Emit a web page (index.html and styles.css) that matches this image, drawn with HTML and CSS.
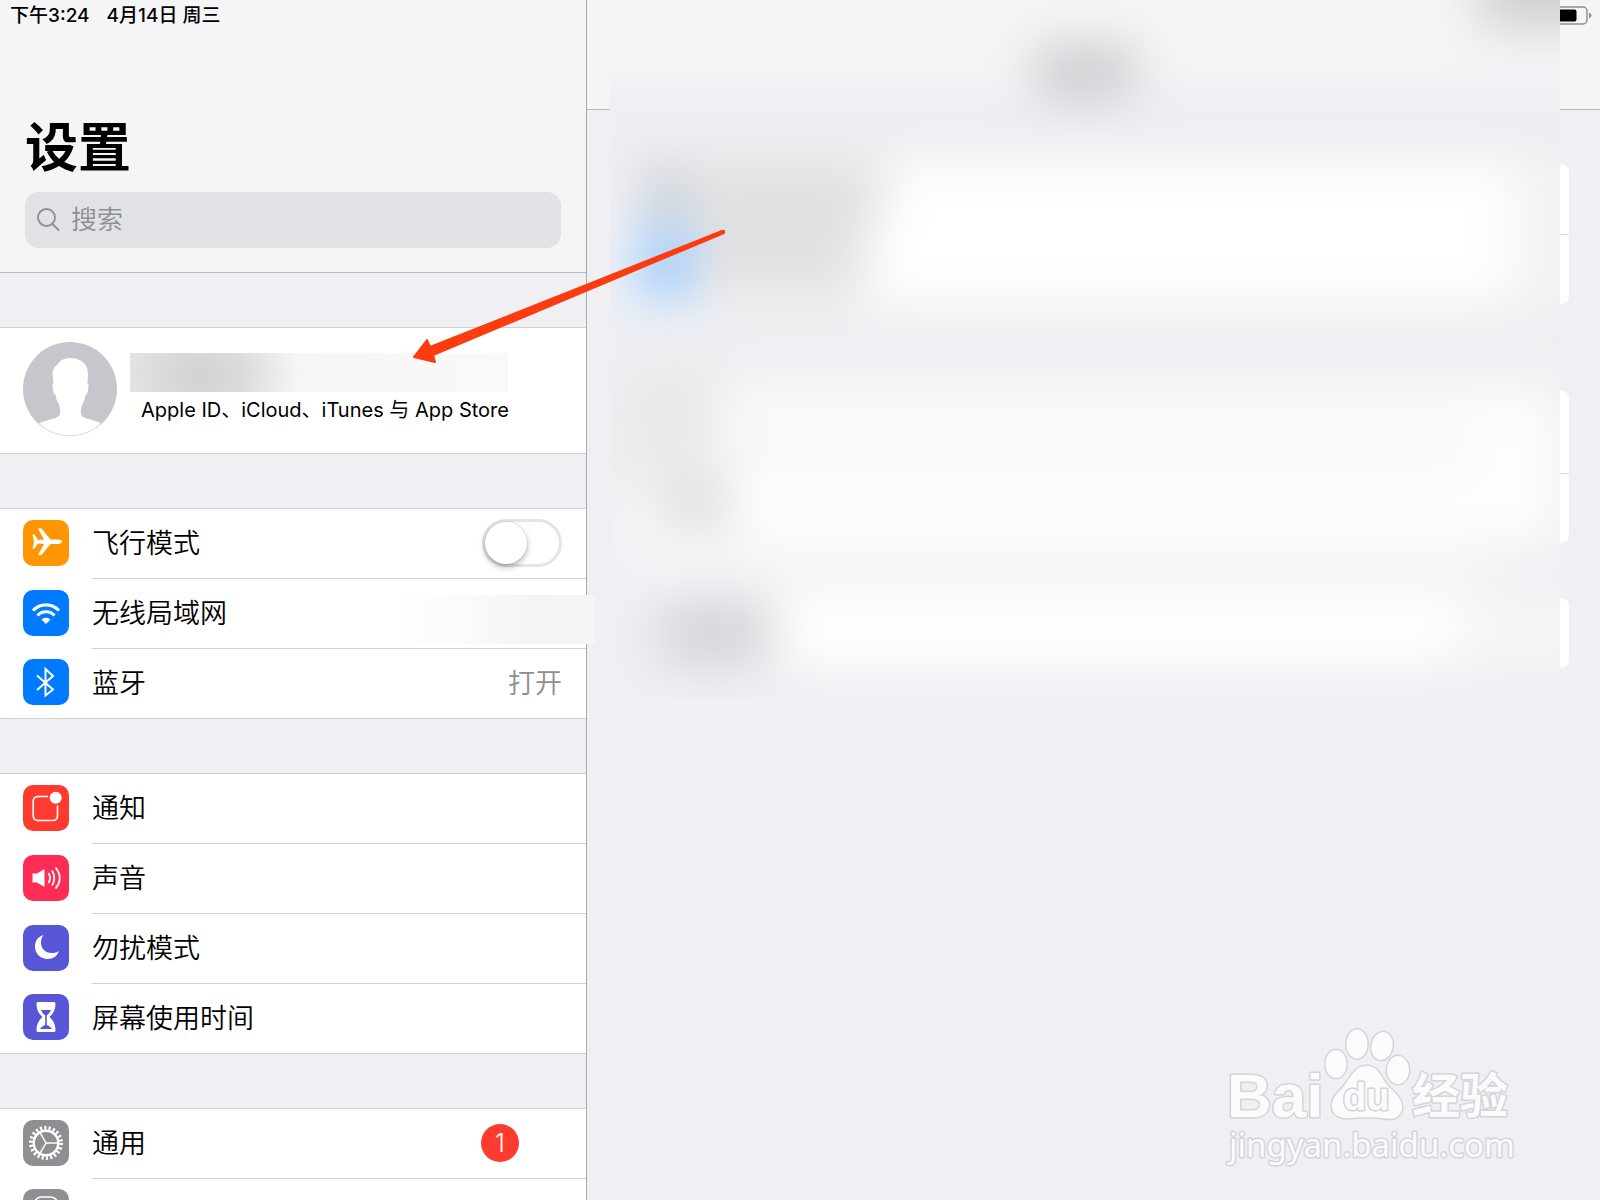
FILE: index.html
```html
<!DOCTYPE html>
<html lang="zh-CN">
<head>
<meta charset="utf-8">
<meta name="viewport" content="width=device-width, initial-scale=1">
<title>设置</title>
<link rel="stylesheet" href="styles.css">
</head>
<body>
<div class="app">
  <aside class="sidebar">
    <header class="sidebar-head">
      <div class="status"><span>下午3:24</span><span>4月14日 周三</span></div>
      <h1 class="title">设置</h1>
      <label class="search">
        <svg class="search-icon" viewBox="0 0 24 24" aria-hidden="true"><circle cx="9.500" cy="9.500" r="8.500"/><path d="M15.500 16L22 22.500"/></svg>
        <input class="search-input" type="search" placeholder="搜索" aria-label="搜索">
      </label>
    </header>

    <a class="group profile" href="#account">
      <svg class="avatar" viewBox="0 0 94 94" aria-hidden="true">
        <circle cx="47" cy="47" r="47" fill="#c7c6cd"/>
        <path fill="#fff" d="M47 16C57 16 65 21 65 32L64.500 42C66 42 65.500 45 65 48C64.500 51 64 53 62.500 53C62 57 61 59 59.500 62C58 66 57 71 59 74C62 77 72 78 78 81.500A46 46 0 0 1 16 81.500C22 78 33 77 36 74C38 71 37 66 36 62C34 59 33 57 33 53C31 53 30.500 51 30 48C29.500 45 29 42 30.500 42L29.500 32C30 27 31 25 34 23C37 18 42 16 47 16Z"/>
      </svg>
      <span class="profile-text">
        <span class="name-mask"></span>
        <span class="profile-sub">Apple ID、iCloud、iTunes 与 App Store</span>
      </span>
    </a>

    <nav class="group">
      <div class="row">
        <svg class="icon orange" viewBox="0 0 46 46" aria-hidden="true"><path fill="#fff" d="M9.500 14.500H11.500L15 20L21 19.500L15 8.500H18.500L27.500 19.500H35C37.500 19.500 39 20.500 39 21.700S37.500 24 35 24H27.500L18.500 35H15L21 24L15 23.500L11.500 28.500H9.500L11 21.700Z"/></svg>
        <label class="line" for="airplane"><span class="label">飞行模式</span>
          <input class="switch" id="airplane" type="checkbox" role="switch">
        </label>
      </div>
      <a class="row wifi" href="#wifi">
        <svg class="icon blue" viewBox="0 0 46 46" aria-hidden="true"><g fill="none" stroke="#fff" stroke-width="3.200"><path d="M10 20.500C17 13 29 13 36 20.500"/><path d="M14.500 25.500C19 20.500 27 20.500 31.500 25.500"/></g><path fill="#fff" d="M18.500 29.500C21 27 25 27 27.500 29.500L23 34Z"/></svg>
        <span class="line"><span class="label">无线局域网</span></span>
        <span class="wifi-mask"></span>
      </a>
      <a class="row" href="#bluetooth">
        <svg class="icon blue" viewBox="0 0 46 46" aria-hidden="true"><path fill="none" stroke="#fff" stroke-width="2" d="M14 16.500L30 30.500L22.500 36.500V10L30 17L14 31"/></svg>
        <span class="line"><span class="label">蓝牙</span><span class="value">打开</span></span>
      </a>
    </nav>

    <nav class="group">
      <a class="row" href="#notifications">
        <svg class="icon red" viewBox="0 0 46 46" aria-hidden="true"><path fill="none" stroke="#fff" stroke-width="1.600" d="M25 11.500H15.500Q10.200 11.500 10.200 16.500V30.500Q10.200 35.500 15.500 35.500H29.500Q34.500 35.500 34.500 30.500V20.500"/><circle cx="32.700" cy="12.800" r="6" fill="#fff"/></svg>
        <span class="line"><span class="label">通知</span></span>
      </a>
      <a class="row" href="#sounds">
        <svg class="icon pink" viewBox="0 0 46 46" aria-hidden="true"><path fill="#fff" d="M9.500 18.500H14L21.500 14V32L14 27.500H9.500Z"/><g fill="none" stroke="#fff" stroke-width="1.800"><path d="M25.500 18Q28.500 23 25.500 28"/><path d="M29 15.500Q33.500 23 29 30.500"/><path d="M32.500 12.500Q41 23 32.500 33.500"/></g></svg>
        <span class="line"><span class="label">声音</span></span>
      </a>
      <a class="row" href="#dnd">
        <svg class="icon indigo" viewBox="0 0 46 46" aria-hidden="true"><path fill="#fff" d="M20.500 10C15 11.500 12 16 12 21.500C12 28.500 17.500 34 24.500 34C30 34 34.500 31 36 26C34 27.500 31.500 28 29 28C22 28 18 23.500 18 17.500C18 14.500 19 12 20.500 10Z"/></svg>
        <span class="line"><span class="label">勿扰模式</span></span>
      </a>
      <a class="row" href="#screen-time">
        <svg class="icon indigo" viewBox="0 0 46 46" aria-hidden="true"><path fill="#fff" d="M15 8H31Q32.500 8 32.500 9.500C32.500 16 30 20 26.500 23C30 26 32.500 30 32.500 36.500Q32.500 38 31 38H15Q13.500 38 13.500 36.500C13.500 30 16 26 19.500 23C16 20 13.500 16 13.500 9.500Q13.500 8 15 8Z"/><path fill="#5856d6" d="M18 16H28C27 18.500 25.500 20 23.800 21.500V31C26 32 28 33 29 35H17C18 33 20 32 22.200 31V21.500C20.500 20 19 18.500 18 16Z"/></svg>
        <span class="line"><span class="label">屏幕使用时间</span></span>
      </a>
    </nav>

    <nav class="group">
      <a class="row" href="#general">
        <svg class="icon gray" viewBox="0 0 46 46" aria-hidden="true"><g fill="none" stroke="#fff"><circle cx="23" cy="23" r="15" stroke-width="4" stroke-dasharray="2.100 2.184"/><circle cx="23" cy="23" r="12.300" stroke-width="2.400"/><path stroke-width="1.500" d="M23 23H35M23 23L17 12.600M23 23L17 33.400"/></g></svg>
        <span class="line"><span class="label">通用</span><span class="badge">1</span></span>
      </a>
      <a class="row" href="#control-center" aria-label="控制中心">
        <svg class="icon gray" viewBox="0 0 46 46" aria-hidden="true"><rect x="12" y="8" width="22" height="12" rx="6" fill="none" stroke="#fff" stroke-width="1.600"/></svg>
        <span class="line"></span>
      </a>
    </nav>
  </aside>

  <main class="detail">
    <header class="detail-head">
      <svg class="battery" viewBox="0 0 44 20" aria-hidden="true"><rect x="1" y="1" width="38" height="17" rx="4" fill="none" stroke="#8e8e93" stroke-width="1.500"/><rect x="3.500" y="3.500" width="25" height="12" rx="2"/><path fill="#8e8e93" d="M41 6.500Q43.500 7.500 43.500 9.500T41 12.500Z"/></svg>
    </header>
    <div class="cards">
      <section class="card"><div class="cell"></div><div class="cell"></div></section>
      <section class="card"><div class="cell tall"></div><div class="cell"></div></section>
      <section class="card"><div class="cell"></div></section>
    </div>
    <svg class="haze" viewBox="0 0 950 700" preserveAspectRatio="none" aria-hidden="true">
      <defs>
        <filter id="soft" color-interpolation-filters="sRGB" filterUnits="userSpaceOnUse" x="-150" y="-150" width="1250" height="1000"><feGaussianBlur stdDeviation="25"/></filter>
      </defs>
      <rect width="950" height="700" fill="#efeff4"/>
      <g filter="url(#soft)">
        <rect x="-150" y="-150" width="1250" height="1000" fill="#efeff4"/>
        <rect x="-150" y="-150" width="1250" height="240" fill="#f5f5f8"/>
        <rect x="-150" y="109" width="1250" height="16" fill="#ebebee"/>
        <rect x="20" y="162" width="940" height="142" fill="#fff"/>
        <rect x="900" y="162" width="60" height="142" fill="#f4f4f5"/>
        <rect x="20" y="388" width="930" height="158" fill="#fdfdfd"/>
        <rect x="20" y="546" width="860" height="50" fill="#f3f4f7"/>
        <rect x="60" y="596" width="790" height="70" fill="#fff"/>
        <rect x="850" y="596" width="130" height="70" fill="#f6f6f8"/>
        <rect x="425" y="46" width="100" height="50" fill="#c8cacc"/>
        <rect x="870" y="-60" width="160" height="88" fill="#cdcfd0"/>
        <rect x="28" y="164" width="52" height="56" fill="#cbcfd6"/>
        <rect x="84" y="164" width="190" height="58" fill="#e0e0e0"/>
        <rect x="28" y="226" width="54" height="74" fill="#9dcafb"/>
        <rect x="86" y="222" width="170" height="74" fill="#e1e1e1"/>
        <rect x="0" y="310" width="950" height="60" fill="#efeff3"/>
        <rect x="20" y="376" width="90" height="50" fill="#e7e7e8"/>
        <rect x="10" y="426" width="100" height="60" fill="#ebebeb"/>
        <rect x="50" y="482" width="70" height="48" fill="#dbdcdd"/>
        <rect x="120" y="430" width="740" height="28" fill="#f3f3f3"/>
        <rect x="50" y="600" width="112" height="64" fill="#d2d4d7"/>
      </g>
    </svg>
  </main>

  <svg class="arrow" viewBox="0 0 314 136" aria-hidden="true"><path fill="#fc3c10" stroke="#fc3c10" stroke-width="2" stroke-linejoin="round" d="M3 128L16 111L19 118L311 2Q314 1 313 4L22 126L24 133Z"/></svg>

  <svg class="watermark" viewBox="0 0 300 160" role="img" aria-label="Baidu 经验">
    <g class="wm-shape">
      <ellipse cx="116" cy="44" rx="10.500" ry="14"/><ellipse cx="137" cy="24" rx="10.500" ry="14.500"/><ellipse cx="162" cy="26" rx="10.500" ry="14" transform="rotate(10 162 26)"/><ellipse cx="178" cy="50" rx="11" ry="14"/>
      <path d="M147 46C160 46 161 60 171 69C179 76 183 82 182 89C180 99 171 100 163 98C151 97 143 97 131 98C121 99 112 96 112 86C112 77 118 73 123 67C131 58 134 46 147 46Z"/>
    </g>
    <text class="wm-text wm-bai" x="7" y="97">Bai</text>
    <text class="wm-text wm-du" x="123" y="90">du</text>
    <text class="wm-text wm-exp" x="192" y="93">经验</text>
    <text class="wm-text wm-url" x="9" y="137">jingyan.baidu.com</text>
  </svg>
</div>
</body>
</html>
```
FILE: styles.css
```css
* { box-sizing: border-box; }

body {
  margin: 0;
  background: #efeff4;
  color: #000;
  font-family: Inter, "Noto Sans CJK SC", sans-serif;
  font-size: 27px;
  font-weight: 350;
}

a { color: inherit; text-decoration: none; }

.app {
  position: relative;
  display: flex;
  height: 100vh;
  overflow: hidden;
}

.sidebar {
  flex: 0 0 587px;
  border-right: 1px solid #a9a9ae;
}

.sidebar-head {
  height: 273px;
  padding: 0 25px;
  background: #f5f5f8;
  border-bottom: 1px solid #b9b9be;
}

.status {
  display: flex;
  gap: 17px;
  height: 32px;
  margin: 0 -15px;
  font-size: 19px;
  font-weight: 500;
  line-height: 32px;
}

.title {
  margin: 78px 0 6px;
  font-size: 53px;
  font-weight: 700;
  line-height: 76px;
}

.search {
  display: flex;
  align-items: center;
  gap: 10px;
  height: 56px;
  padding: 0 12px;
  border-radius: 14px;
  background: #e1e2e6;
}

.search-icon {
  width: 24px;
  height: 24px;
  fill: none;
  stroke: #8e8e93;
  stroke-width: 1.800;
}

.search-input {
  flex: 1;
  min-width: 0;
  height: 54px;
  padding: 0 0 2px;
  border: 0;
  outline: 0;
  background: none;
  font: inherit;
  font-size: 26px;
}

.search-input::placeholder { color: #8e8e93; }

.group {
  display: block;
  margin-top: 54px;
  background: #fff;
  border-top: 1px solid #d0d0d4;
}

.profile {
  display: flex;
  gap: 13px;
  height: 127px;
  padding: 14px 23px;
  border-bottom: 1px solid #d0d0d4;
}

.avatar { width: 94px; height: 94px; }

.profile-text {
  display: flex;
  flex-direction: column;
  padding-top: 11px;
}

.name-mask {
  width: 378px;
  height: 39px;
  background: radial-gradient(ellipse 100px 70px at 70px 22px, #d4d4d4 10%, #dadada 40%, rgba(240, 240, 240, 0)), linear-gradient(90deg, #e9e9e9, #f6f6f6 40%, #f9f9f9);
}

.profile-sub {
  padding-left: 11px;
  font-size: 20px;
  font-weight: 400;
  line-height: 37px;
  white-space: nowrap;
}

.row {
  position: relative;
  display: flex;
  align-items: center;
  gap: 23px;
  height: 70px;
  padding-left: 23px;
}

.row:last-child { border-bottom: 1px solid #d0d0d4; }

.icon {
  flex: none;
  width: 46px;
  height: 46px;
  margin-bottom: 3px;
  border-radius: 10px;
}

.orange { background: #ff9500; }
.blue { background: #007aff; }
.red { background: #ff3b30; }
.pink { background: #ff2d55; }
.indigo { background: #5856d6; }
.gray { background: #8e8e93; }

.line {
  flex: 1;
  display: flex;
  align-items: center;
  justify-content: space-between;
  height: 100%;
  padding: 0 24px 2px 0;
  border-bottom: 1px solid #d0d0d4;
}

.row:last-child .line { border-bottom: 0; }

.label, .value { padding-bottom: 2px; }

.value { color: #8e8e93; }

.switch {
  appearance: none;
  width: 80px;
  height: 48px;
  margin: 0;
  border: 3px solid #e5e5e5;
  border-radius: 24px;
  background: #fff;
}

.switch::before {
  content: "";
  display: block;
  width: 42px;
  height: 42px;
  border-radius: 50%;
  background: #fff;
  box-shadow: 0 3px 6px rgba(0, 0, 0, .3), 0 0 2px rgba(0, 0, 0, .15);
}

.switch:checked { background: #4cd964; }
.switch:checked::before { margin-left: auto; }

.wifi-mask {
  position: absolute;
  z-index: 1;
  top: 16px;
  right: -9px;
  width: 205px;
  height: 49px;
  background: linear-gradient(90deg, rgba(250, 250, 250, 0), #fafafa 40%, #f4f4f5 70%, #f5f5f8);
}

.badge {
  width: 38px;
  height: 38px;
  margin-right: 43px;
  border-radius: 50%;
  background: #ff3b30;
  color: #fff;
  font-size: 25px;
  line-height: 38px;
  text-align: center;
}

.detail {
  position: relative;
  flex: 1;
  min-width: 0;
}

.detail-head {
  display: flex;
  justify-content: flex-end;
  height: 110px;
  padding: 6px 8px;
  background: #f5f5f8;
  border-bottom: 1px solid #b9b9be;
}

.battery { width: 44px; height: 20px; }

.cards {
  display: grid;
  gap: 55px;
  padding: 54px 31px;
}

.card {
  border-radius: 8px;
  background: #fff;
}

.card:nth-child(2) { margin-top: 32px; }

.cell { height: 70px; }
.tall { height: 82px; }
.cell + .cell { border-top: 1px solid #dcdce0; }

.haze {
  position: absolute;
  top: 0;
  left: 23px;
  width: calc(100% - 63px);
  height: 700px;
}

.arrow {
  position: absolute;
  top: 229px;
  left: 411px;
  width: 314px;
  height: 136px;
}

.watermark {
  position: absolute;
  right: 80px;
  bottom: 20px;
  width: 300px;
  height: 160px;
  overflow: visible;
}

.wm-shape, .wm-text {
  fill: #fbfbfd;
  stroke: #d4d4d9;
  stroke-width: 3px;
  stroke-linejoin: round;
  paint-order: stroke;
}

.wm-bai { font: 700 62px "Liberation Sans", sans-serif; }
.wm-du { font: 700 38px "Liberation Sans", sans-serif; }
.wm-exp { font: 700 48px "Noto Sans CJK SC", sans-serif; }
.wm-url { font: 400 33px "Noto Sans", sans-serif; }
```
